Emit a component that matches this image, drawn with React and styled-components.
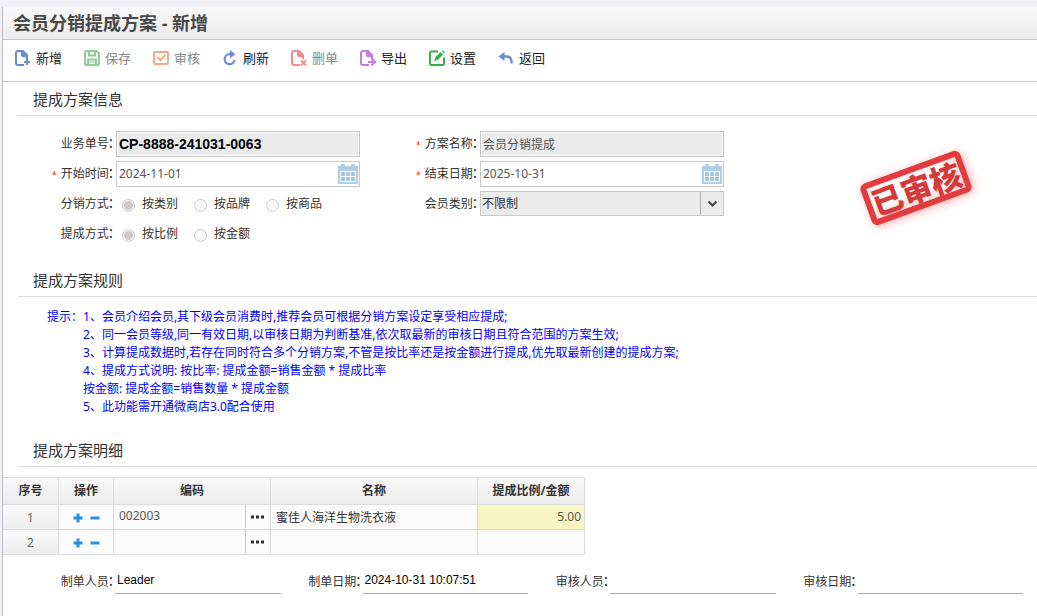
import React from "react";
import styled, { createGlobalStyle, css } from "styled-components";

const line = "#dcdcdc";
const edge = "#c8c8c8";

const GlobalStyle = createGlobalStyle`
  * { box-sizing: border-box; }
  body {
    margin: 0;
    background: #f0f0f6;
    color: #333;
    font: 12px/18px "Noto Sans", "Noto Sans CJK SC", sans-serif;
  }
  input, button, select { font: inherit; color: inherit; margin: 0; }
`;

const Page = styled.div`
  min-height: 100vh;
  padding: 7px 0 0 2px;
  display: flex;
`;
const Panel = styled.main`
  flex: 1;
  min-width: 0;
  background: #fff;
  border-left: 1px solid #bcbcc2;
`;
const TitleBar = styled.header`
  height: 33px;
  padding-left: 10px;
  display: flex;
  align-items: center;
  background: linear-gradient(#f8f8f8, #ececec);
  border-bottom: 1px solid ${edge};
`;
const PageTitle = styled.h1`
  margin: 0;
  color: #484848;
  font-size: 18px;
  line-height: 24px;
  font-weight: 700;
`;
const Toolbar = styled.nav`
  height: 42px;
  padding: 0 0 5px 12px;
  display: flex;
  align-items: center;
  gap: 22px;
  border-bottom: 1px solid ${edge};
`;
const ToolButton = styled.button`
  display: flex;
  align-items: center;
  gap: 5px;
  padding: 0;
  border: 0;
  background: none;
  font-size: 13px;
  line-height: 20px;
  color: #222;
  cursor: pointer;
  &:disabled { color: #8a8a8a; cursor: default; }
  svg { width: 16px; height: 16px; flex: none; }
`;
const SectionTitle = styled.h2`
  margin: 0 0 0 15px;
  padding-left: 15px;
  height: 34px;
  font-size: 15px;
  line-height: 35px;
  font-weight: 400;
  color: #333;
  border-bottom: 1px solid ${line};
`;
const Form = styled.form`
  position: relative;
  display: grid;
  grid-template-columns: 364px 364px;
  grid-auto-rows: 30px;
  padding: 15px 0 12px;
`;
const Field = styled.div`
  display: flex;
  align-items: flex-start;
  grid-column: ${(p) => p.$column};
`;
const FieldLabel = styled.label`
  width: ${(p) => p.$width || 113}px;
  flex: none;
  padding-right: ${(p) => p.$gap || 3}px;
  line-height: 26px;
  height: 26px;
  display: flex;
  justify-content: flex-end;
`;
const Colon = styled.span`
  font-size: 16px;
  line-height: 22px;
`;
const Required = styled.span`
  color: #f33;
  font: 12px/26px "Liberation Sans", sans-serif;
  padding: 2px 4px 0 0;
`;
const fieldBox = css`
  width: 244px;
  height: 26px;
  border: 1px solid ${edge};
  border-radius: 0;
`;
const TextInput = styled.input`
  ${fieldBox}
  padding: 0 2px;
  outline: none;
  color: #555;
  background: ${(p) => (p.readOnly ? "#ebebeb" : "#fff")};
  box-shadow: inset 0 0 0 1px #fff;
  ${(p) =>
    p.$strong &&
    css`
      color: #000;
      font: bold 14px/20px "Liberation Sans", sans-serif;
    `}
`;
const DateBox = styled.div`
  ${fieldBox}
  display: flex;
  align-items: center;
  padding: 0 1px 0 2px;
  input {
    flex: 1;
    min-width: 0;
    height: 22px;
    padding: 0 0 1px;
    border: 0;
    outline: none;
    background: none;
    color: #555;
  }
  button {
    display: flex;
    padding: 0;
    border: 0;
    background: none;
  }
`;
const SelectBox = styled.div`
  ${fieldBox}
  height: 25px;
  position: relative;
  background: #ebebeb;
  select {
    width: 100%;
    height: 23px;
    padding: 0 24px 0 1px;
    border: 0;
    outline: none;
    appearance: none;
    background: none;
    color: #333;
  }
`;
const SelectArrow = styled.span`
  position: absolute;
  top: 0;
  right: 0;
  bottom: 0;
  width: 23px;
  display: flex;
  align-items: center;
  justify-content: center;
  border-left: 1px solid #aaa;
  pointer-events: none;
`;
const RadioList = styled.div`
  display: flex;
  padding-left: 6px;
`;
const RadioLabel = styled.label`
  width: 72px;
  display: flex;
  align-items: center;
  gap: 7px;
  height: 26px;
`;
const Radio = styled.input`
  appearance: none;
  width: 13px;
  height: 13px;
  margin: 2px 0 0;
  border: 1px solid #ccc;
  border-radius: 50%;
  background: #f8f8f8;
  &:checked {
    background: radial-gradient(circle, #ccc 0 4px, #f8f8f8 5px);
  }
`;
const Stamp = styled.div`
  position: absolute;
  top: 50px;
  left: 860px;
  width: 106px;
  height: 44px;
  display: flex;
  align-items: center;
  justify-content: center;
  border: 6px solid #e23c3e;
  border-radius: 6px;
  background: #fff;
  box-shadow: 2px 2px 10px rgba(255, 40, 40, 0.35), inset -4px -4px 14px rgba(255, 60, 60, 0.25);
  color: #d43a3a;
  font: 900 31px/32px "Noto Sans CJK SC", sans-serif;
  white-space: nowrap;
  transform: rotate(-20deg);
`;
const Rules = styled.div`
  display: flex;
  padding: 11px 0 17px 44px;
  color: #00f;
`;
const RuleLines = styled.div`
  p { margin: 0; }
`;
const Grid = styled.table`
  margin-top: 10px;
  width: 582px;
  table-layout: fixed;
  border-collapse: separate;
  border-spacing: 0;
  border-top: 1px solid ${line};
`;
const HeadCell = styled.th`
  width: ${(p) => p.$width}px;
  height: 27px;
  padding: 0;
  font-weight: 700;
  color: #333;
  background: linear-gradient(#f9f9f9, #ececec);
  border-right: 1px solid ${line};
  border-bottom: 1px solid ${line};
`;
const Cell = styled.td`
  height: 25px;
  padding: ${(p) => p.$pad || "0"};
  text-align: ${(p) => p.$align || "left"};
  background: ${(p) => (p.$marked ? "#f8f5c3" : "#fbfbfb")};
  color: ${(p) => p.$color || "#333"};
  border-right: 1px solid ${line};
  border-bottom: 1px solid ${line};
`;
const NumberCell = styled(Cell)`
  padding-top: 2px;
  text-align: center;
  color: #666;
  background: linear-gradient(#f9f9f9, #ededed);
`;
const RowActions = styled.div`
  display: flex;
  justify-content: center;
  gap: 7px;
`;
const IconButton = styled.button`
  display: flex;
  align-items: center;
  justify-content: center;
  padding: 0;
  border: 0;
  background: none;
`;
const CodeBox = styled.div`
  display: flex;
  height: 24px;
  input {
    flex: 1;
    min-width: 0;
    padding: 0 5px 2px;
    border: 0;
    outline: none;
    background: none;
    color: #555;
  }
  button {
    width: 25px;
    height: 23px;
    border-left: 1px solid ${edge};
  }
`;
const Footer = styled.footer`
  display: grid;
  grid-template-columns: repeat(4, 1fr);
  padding: 14px 14px 22px 30px;
`;
const FooterField = styled.div`
  display: flex;
  input {
    flex: 1;
    min-width: 0;
    height: 25px;
    padding: 0 2px 2px;
    border: 0;
    border-bottom: 1px solid #aaa;
    outline: none;
    background: none;
    color: #000;
    font: 12px/18px "Liberation Sans", sans-serif;
  }
`;

function SheetShape() {
  return (
    <>
      <path d="M9 15H3Q1 15 1 13V3Q1 1 3 1H8" fill="none" stroke="currentColor" strokeWidth="2" />
      <path d="M6 0H8.5L13 4.7V9H11V7.2H8.5Q6 7.2 6 5.2Z" fill="currentColor" />
    </>
  );
}

const glyphs = {
  add: (
    <>
      <SheetShape />
      <path d="M12 9v6M9 12h6" stroke="currentColor" strokeWidth="2" />
    </>
  ),
  save: (
    <g fill="none" stroke="currentColor" strokeWidth="2">
      <path d="M2.5 1H12.5L15 3.5V13.5Q15 15 13.5 15H2.5Q1 15 1 13.5V2.5Q1 1 2.5 1Z" />
      <path d="M5 1V5.5H11V1M4 15V9.5H12V15" />
      <path d="M5 12H11" strokeWidth="1" />
    </g>
  ),
  audit: (
    <g fill="none" stroke="currentColor" strokeWidth="2">
      <rect x="1" y="2" width="14" height="12" rx="1" />
      <path d="M4.5 7L7.5 10L12.5 5" />
    </g>
  ),
  refresh: (
    <>
      <path d="M10 4.2H7.5A5 5 0 1 0 12.6 10" fill="none" stroke="currentColor" strokeWidth="2.2" />
      <path d="M8 0L13.5 4.2L8 8.2V5L9.5 4.2L8 3Z" fill="currentColor" />
    </>
  ),
  remove: (
    <>
      <SheetShape />
      <path d="M10 10.5l5 5M15 10.5l-5 5" stroke="currentColor" strokeWidth="1.8" />
    </>
  ),
  export: (
    <>
      <SheetShape />
      <path d="M8 12h6.5M11.5 8.5l3.5 3.5l-3.5 3.5" fill="none" stroke="currentColor" strokeWidth="2" />
    </>
  ),
  settings: (
    <>
      <path d="M9 1.5H2.5Q1 1.5 1 3V13.5Q1 15 2.5 15H13.5Q15 15 15 13.5V7.5" fill="none" stroke="currentColor" strokeWidth="2" />
      <path d="M5.2 11.2L6.5 7L11.8 2L14.2 4.4L9 9.8ZM12.7 1.2L13.8 0.2L16 2.4L15 3.5Z" fill="currentColor" />
    </>
  ),
  back: (
    <>
      <path d="M0.5 6.5L6.5 2V11Z" fill="currentColor" />
      <path d="M5 6.5H9Q13.5 6.5 13.7 13.5" fill="none" stroke="currentColor" strokeWidth="2.4" />
    </>
  ),
};

const tools = [
  { icon: "add", text: "新增", color: "#6b8ad8" },
  { icon: "save", text: "保存", color: "#90cc95", disabled: true },
  { icon: "audit", text: "审核", color: "#f3a985", disabled: true },
  { icon: "refresh", text: "刷新", color: "#6b8ad8" },
  { icon: "remove", text: "删单", color: "#f28a8a", disabled: true },
  { icon: "export", text: "导出", color: "#c87ae0" },
  { icon: "settings", text: "设置", color: "#3dad4a" },
  { icon: "back", text: "返回", color: "#6b8ad8" },
];

function Label({ children, required, ...rest }) {
  return (
    <FieldLabel {...rest}>
      {required && <Required>*</Required>}
      {children}
      <Colon>:</Colon>
    </FieldLabel>
  );
}

function CalendarIcon() {
  return (
    <svg width="20" height="20" viewBox="0 0 20 20" aria-hidden="true">
      <path d="M0 2H3V0H7V2H13V0H17V2H20V20H0Z" fill="#aecde6" />
      <path d="M2 7H18V18H2Z" fill="#fff" />
      <g fill="#a3c5e0">
        {[8, 13].map((y) =>
          [3, 8, 13].map((x) => <rect key={`${x}-${y}`} x={x} y={y} width="4" height="4" />)
        )}
      </g>
    </svg>
  );
}

function DateField({ id, label, value, column }) {
  return (
    <Field $column={column}>
      <Label htmlFor={id} required>{label}</Label>
      <DateBox>
        <input id={id} defaultValue={value} />
        <button type="button" aria-label="选择日期"><CalendarIcon /></button>
      </DateBox>
    </Field>
  );
}

function RadioField({ name, label, options }) {
  return (
    <Field $column="1">
      <Label as="span" id={name}>{label}</Label>
      <RadioList role="radiogroup" aria-labelledby={name}>
        {options.map((text, i) => (
          <RadioLabel key={text}>
            <Radio type="radio" name={name} defaultChecked={i === 0} disabled />
            {text}
          </RadioLabel>
        ))}
      </RadioList>
    </Field>
  );
}

const rules = [
  "1、会员介绍会员,其下级会员消费时,推荐会员可根据分销方案设定享受相应提成;",
  "2、同一会员等级,同一有效日期,以审核日期为判断基准,依次取最新的审核日期且符合范围的方案生效;",
  "3、计算提成数据时,若存在同时符合多个分销方案,不管是按比率还是按金额进行提成,优先取最新创建的提成方案;",
  "4、提成方式说明: 按比率: 提成金额=销售金额 * 提成比率",
  "按金额: 提成金额=销售数量 * 提成金额",
  "5、此功能需开通微商店3.0配合使用",
];

const columns = [
  ["序号", 56],
  ["操作", 55],
  ["编码", 157],
  ["名称", 207],
  ["提成比例/金额", 107],
];

const rows = [
  { code: "002003", name: "蜜佳人海洋生物洗衣液", rate: "5.00" },
  { code: "", name: "", rate: "" },
];

const signatures = [
  ["制单人员", "Leader"],
  ["制单日期", "2024-10-31 10:07:51"],
  ["审核人员", ""],
  ["审核日期", ""],
];

export default function App() {
  return (
    <Page>
      <GlobalStyle />
      <Panel>
        <TitleBar>
          <PageTitle>会员分销提成方案 - 新增</PageTitle>
        </TitleBar>
        <Toolbar>
          {tools.map((t) => (
            <ToolButton key={t.icon} type="button" disabled={t.disabled}>
              <svg viewBox="0 0 16 16" color={t.color} aria-hidden="true">{glyphs[t.icon]}</svg>
              {t.text}
            </ToolButton>
          ))}
        </Toolbar>

        <SectionTitle>提成方案信息</SectionTitle>
        <Form>
          <Field $column="1">
            <Label htmlFor="billNo">业务单号</Label>
            <TextInput id="billNo" $strong readOnly value="CP-8888-241031-0063" />
          </Field>
          <Field $column="2">
            <Label htmlFor="planName" required>方案名称</Label>
            <TextInput id="planName" readOnly value="会员分销提成" />
          </Field>
          <DateField id="startDate" label="开始时间" value="2024-11-01" column="1" />
          <DateField id="endDate" label="结束日期" value="2025-10-31" column="2" />
          <RadioField name="shareMode" label="分销方式" options={["按类别", "按品牌", "按商品"]} />
          <Field $column="2">
            <Label htmlFor="memberType">会员类别</Label>
            <SelectBox>
              <select id="memberType" defaultValue="不限制">
                <option>不限制</option>
              </select>
              <SelectArrow>
                <svg width="11" height="8" viewBox="0 0 11 8" aria-hidden="true">
                  <path d="M1.5 1.5L5.5 5.5L9.5 1.5" fill="none" stroke="#444" strokeWidth="2.2" />
                </svg>
              </SelectArrow>
            </SelectBox>
          </Field>
          <RadioField name="commissionMode" label="提成方式" options={["按比例", "按金额"]} />
          <Stamp>已审核</Stamp>
        </Form>

        <SectionTitle>提成方案规则</SectionTitle>
        <Rules>
          <span>提示：</span>
          <RuleLines>
            {rules.map((text) => <p key={text}>{text}</p>)}
          </RuleLines>
        </Rules>

        <SectionTitle>提成方案明细</SectionTitle>
        <Grid>
          <thead>
            <tr>
              {columns.map(([text, width]) => (
                <HeadCell key={text} $width={width}>{text}</HeadCell>
              ))}
            </tr>
          </thead>
          <tbody>
            {rows.map((row, i) => (
              <tr key={i}>
                <NumberCell>{i + 1}</NumberCell>
                <Cell $pad="1px 0 0">
                  <RowActions>
                    <IconButton type="button" aria-label="添加行">
                      <svg width="10" height="10" viewBox="0 0 10 10">
                        <path d="M5 0.5V9.5M0.5 5H9.5" stroke="#2893da" strokeWidth="3" />
                      </svg>
                    </IconButton>
                    <IconButton type="button" aria-label="删除行">
                      <svg width="10" height="10" viewBox="0 0 10 10">
                        <path d="M0.5 5H9.5" stroke="#2893da" strokeWidth="3" />
                      </svg>
                    </IconButton>
                  </RowActions>
                </Cell>
                <Cell>
                  <CodeBox>
                    <input aria-label="编码" defaultValue={row.code} />
                    <IconButton type="button" aria-label="选择商品">
                      <svg width="14" height="4" viewBox="0 0 14 4">
                        <path d="M0 0.5h3v3h-3zM5 0.5h3v3h-3zM10 0.5h3v3h-3z" fill="#33283a" />
                      </svg>
                    </IconButton>
                  </CodeBox>
                </Cell>
                <Cell $pad="2px 5px 0">{row.name}</Cell>
                <Cell $pad="0 3px" $align="right" $marked={!!row.rate} $color="#555">{row.rate}</Cell>
              </tr>
            ))}
          </tbody>
        </Grid>

        <Footer>
          {signatures.map(([label, value]) => (
            <FooterField key={label}>
              <Label htmlFor={label} $width={82} $gap={2}>{label}</Label>
              <input id={label} defaultValue={value} />
            </FooterField>
          ))}
        </Footer>
      </Panel>
    </Page>
  );
}
